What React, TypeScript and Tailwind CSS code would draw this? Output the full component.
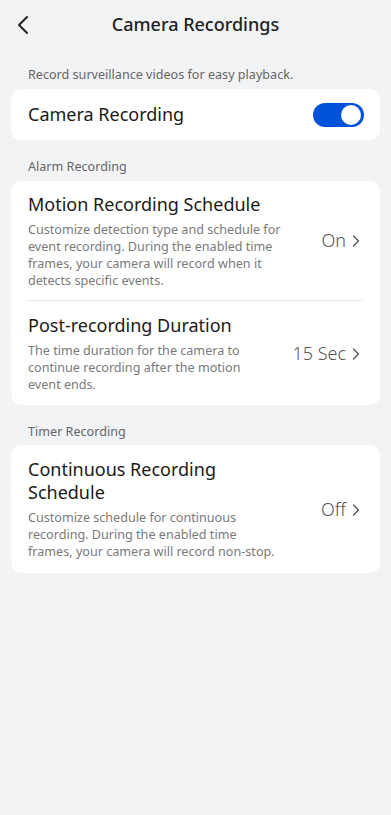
import React from "react";

function Chevron() {
  return (
    <svg width="8" height="12" viewBox="0 0 8 12" className="ml-[6px] mt-[1px]">
      <path d="M1.5 1 L6.5 6 L1.5 11" fill="none" stroke="#555" strokeWidth="1.3" strokeLinecap="round" strokeLinejoin="round" />
    </svg>
  );
}

function Row({ title, desc, value }: { title: React.ReactNode; desc: React.ReactNode; value: string }) {
  return (
    <div className="flex items-center">
      <div className="flex-1 min-w-0 pr-[10px]">
        <div className="text-[18px] leading-[23px] text-[#1a1a1a]">{title}</div>
        <div className="mt-[5px] text-[12.6px] leading-[17px] text-[#7a7a7a]">{desc}</div>
      </div>
      <div className="flex items-center text-[18px] font-light text-[#555] shrink-0 pr-[3px]">
        {value}
        <Chevron />
      </div>
    </div>
  );
}

export default function App() {
  return (
    <div className="min-h-[815px] bg-[#f2f3f5] font-['Noto_Sans',sans-serif]">
      <div className="relative h-[48px] flex items-center justify-center">
        <svg className="absolute left-[16px] top-[15px]" width="16" height="20" viewBox="0 0 16 20">
          <path d="M11 2 L3 10 L11 18" fill="none" stroke="#222" strokeWidth="2" strokeLinecap="round" strokeLinejoin="round" />
        </svg>
        <div className="text-[18px] font-medium text-[#222]">Camera Recordings</div>
      </div>
      <div className="px-[11px]">
        <div className="pt-[18px] pl-[17px] text-[12.6px] leading-[18px] text-[#666]">Record surveillance videos for easy playback.</div>
        <div className="mt-[5px] h-[51px] rounded-[10px] bg-white flex items-center justify-between pl-[17px] pr-[16px]">
          <div className="text-[18px] text-[#1a1a1a]">Camera Recording</div>
          <div className="w-[51px] h-[24px] rounded-full bg-[#0052d9] flex items-center justify-end pr-[3px]">
            <div className="w-[20px] h-[20px] rounded-full bg-white" />
          </div>
        </div>

        <div className="pt-[18px] pl-[17px] text-[12.6px] leading-[18px] text-[#666]">Alarm Recording</div>
        <div className="mt-[5px] rounded-[10px] bg-white px-[17px]">
          <div className="pt-[11.5px] pb-[11.5px]">
            <Row
              title="Motion Recording Schedule"
              desc={<>Customize detection type and schedule for<br />event recording. During the enabled time<br />frames, your camera will record when it<br />detects specific events.</>}
              value="On"
            />
          </div>
          <div className="h-px bg-[#e6e6e6]" />
          <div className="pt-[13px] pb-[11.5px]">
            <Row
              title="Post-recording Duration"
              desc={<>The time duration for the camera to<br />continue recording after the motion<br />event ends.</>}
              value="15 Sec"
            />
          </div>
        </div>

        <div className="pt-[18px] pl-[17px] text-[12.6px] leading-[18px] text-[#666]">Timer Recording</div>
        <div className="mt-[4px] rounded-[10px] bg-white px-[17px] pt-[13.5px] pb-[12.5px]">
          <Row
            title={<>Continuous Recording<br />Schedule</>}
            desc={<>Customize schedule for continuous<br />recording. During the enabled time<br />frames, your camera will record non-stop.</>}
            value="Off"
          />
        </div>
      </div>
    </div>
  );
}
